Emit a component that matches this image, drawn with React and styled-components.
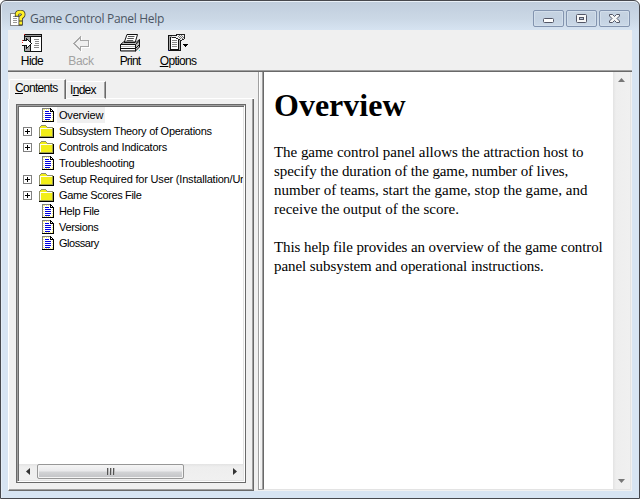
import React from 'react';
import styled, { createGlobalStyle } from 'styled-components';

const GlobalStyle = createGlobalStyle`
  * { box-sizing: border-box; }
  body { margin: 0; background: #fff; overflow: hidden; }
`;

const Window = styled.div`
  width: 640px;
  height: 499px;
  display: flex;
  flex-direction: column;
  padding: 0 7px 7px;
  border: 1px solid #47484d;
  border-radius: 6px 6px 0 0;
  background: linear-gradient(#c0cddc 0, #cbd8e6 18px, #d7e4f2 30px, #d7e4f2 100%);
  box-shadow: inset 0 1px #e9f0f7, inset 1px 0 #e4edf6;
  font-family: 'Liberation Sans', Arial, sans-serif;
  font-size: 11px;
  color: #000;
`;

const TitleBar = styled.header`
  flex: 0 0 29px;
  display: flex;
  align-items: center;
  padding: 7px 2px 0 2px;
  > svg { margin-bottom: 2px; }
`;

const Title = styled.h1`
  flex: 1;
  margin: 0 0 0 4px;
  font: 400 12px/16px 'Open Sans', 'Noto Sans', sans-serif;
  letter-spacing: ${p => p.$spacing}px;
  color: #4c5664;
`;

const Controls = styled.div`
  display: flex;
  gap: 2px;
  align-self: flex-start;
  margin-top: 2px;
`;

const ControlButton = styled.button`
  width: 31px;
  height: 17px;
  padding: 0;
  display: flex;
  align-items: center;
  justify-content: center;
  border: 1px solid #8394af;
  border-radius: 2px;
  background: linear-gradient(#c6d3e1, #c3d1e1 50%, #cbd9e8);
  box-shadow: inset 0 0 0 1px #d2deeb;
`;

const Client = styled.main`
  flex: 1;
  min-height: 0;
  display: flex;
  flex-direction: column;
  background: #f0f0f0;
`;

const Toolbar = styled.nav`
  flex: 0 0 42px;
  display: flex;
  border-bottom: 1px solid #696969;
  box-shadow: inset 0 -1px #a0a0a0;
`;

const Tool = styled.button`
  width: ${p => p.$width || 49}px;
  padding: 4px 0 0;
  border: 0;
  background: none;
  display: flex;
  flex-direction: column;
  align-items: center;
  font: 12px/14px 'Liberation Sans', Arial, sans-serif;
  letter-spacing: ${p => p.$spacing || 0}px;
  color: ${p => (p.$disabled ? '#a2a2a2' : '#000')};
  svg { display: block; margin-bottom: 2px; }
`;

const Key = styled.span`
  text-decoration: underline;
  text-underline-offset: 1px;
`;

const Body = styled.div`
  flex: 1;
  min-height: 0;
  display: flex;
`;

const Navigation = styled.aside`
  flex: 0 0 246px;
  min-width: 0;
  display: flex;
  flex-direction: column;
  padding-top: 7px;
`;

const Tabs = styled.div`
  height: 20px;
  display: flex;
  align-items: flex-end;
`;

const Tab = styled.button`
  width: ${p => p.$width}px;
  height: ${p => (p.$active ? 20 : 18)}px;
  padding: ${p => (p.$active ? '0 0 3px 5px' : '0 0 1px 3px')};
  margin-left: ${p => (p.$active ? 1 : 0)}px;
  border: 0;
  border-top: 1px solid #fff;
  border-left: 1px solid ${p => (p.$active ? '#fff' : '#f8f8f8')};
  border-right: 1px solid #696969;
  border-bottom: ${p => (p.$active ? '0' : '1px solid #fff')};
  box-shadow: inset -1px 0 #a0a0a0;
  border-top-left-radius: 2px;
  background: #f0f0f0;
  text-align: left;
  font: 12px/14px 'Liberation Sans', Arial, sans-serif;
  letter-spacing: ${p => p.$spacing}px;
  color: #000;
`;

const TabRule = styled.div`
  flex: 1;
  height: 1px;
  background: #fff;
`;

const TabPanel = styled.div`
  flex: 1;
  min-height: 0;
  display: flex;
  padding: 5px 7px 7px 7px;
  border-left: 1px solid #fff;
  border-right: 1px solid #696969;
  border-bottom: 1px solid #696969;
  box-shadow: inset -1px -1px #a0a0a0;
`;

const TreeFrame = styled.div`
  flex: 1;
  min-width: 0;
  display: flex;
  border: 1px solid #696969;
`;

const TreeInset = styled.div`
  flex: 1;
  min-width: 0;
  display: flex;
  flex-direction: column;
  border: 1px solid #a0a0a0;
  border-right-color: #fff;
  border-bottom-color: #fff;
  background: #fff;
  box-shadow: inset 1px 1px #696969, inset -1px -1px #e3e3e3;
  padding: 1px;
`;

const TreeList = styled.ul`
  flex: 1;
  min-height: 0;
  margin: 0;
  padding: 0;
  overflow: hidden;
  list-style: none;
`;

const TreeItem = styled.li`
  height: 16px;
  display: flex;
  align-items: center;
  padding-left: 4px;
  white-space: nowrap;
`;

const IconSlot = styled.span`
  flex: 0 0 ${p => p.$width}px;
  height: 16px;
  display: flex;
  align-items: center;
  svg { display: block; }
`;

const ItemLabel = styled.span`
  padding: 0 2px;
  line-height: 16px;
  font-size: 11px;
  letter-spacing: ${p => p.$spacing || 0}px;
  background: ${p => (p.$selected ? '#f0f0f0' : 'transparent')};
`;

const HorizontalBar = styled.div`
  flex: 0 0 16px;
  display: flex;
  background: linear-gradient(#e3e3e3, #eee 3px, #f0f0f0);
`;

const Arrow = styled.span`
  width: ${p => p.$w}px;
  height: ${p => p.$h}px;
  display: flex;
  align-items: center;
  justify-content: center;
`;

const Thumb = styled.div`
  width: 147px;
  height: 15px;
  border: 1px solid #979797;
  border-radius: 2px;
  background: linear-gradient(#f5f5f5, #e9e9eb 48%, #d3d4d6 52%, #c1c2c5);
  box-shadow: inset 0 0 0 1px #f4f4f4;
  display: flex;
  align-items: center;
  justify-content: center;
`;

const Spacer = styled.div`
  flex: 1;
`;

const Splitter = styled.div`
  flex: 0 0 5px;
  margin: 0 0 1px 4px;
  border-left: 1px solid #a0a0a0;
  border-right: 1px solid #a0a0a0;
  border-bottom: 1px solid #a0a0a0;
  background: #f0f0f0;
  box-shadow: inset 1px 0 #fff;
`;

const ContentPane = styled.section`
  flex: 1;
  min-width: 0;
  display: flex;
  background: #fff;
  border-left: 1px solid #696969;
  border-bottom: 1px solid #e3e3e3;
  border-right: 1px solid #e3e3e3;
  margin: 0 1px 1px 0;
`;

const Article = styled.article`
  flex: 1;
  min-width: 0;
  padding: 14px 0 0 10px;
  font: 15px/19px 'Liberation Serif', 'Times New Roman', serif;
  white-space: nowrap;
`;

const Heading = styled.h2`
  margin: 0 0 19px;
  font-size: 32px;
  line-height: 38px;
`;

const Paragraph = styled.p`
  margin: 0 0 19px;
`;

const Line = styled.span`
  display: block;
  letter-spacing: ${p => p.$spacing || 0}px;
`;

const VerticalBar = styled.div`
  width: 17px;
  display: flex;
  flex-direction: column;
  justify-content: space-between;
  background: linear-gradient(90deg, #e3e3e3, #eee 3px, #f0f0f0);
`;

const HelpIcon = () => (
  <svg width="16" height="17" viewBox="0 0 16 17" shapeRendering="crispEdges">
    <path d="M1 3h8v13H1z" fill="#fff" />
    <path d="M.5 15.5V3.5H6M1 15.5h10V12" fill="none" stroke="#888" />
    <path d="M3 6.5h3M3 8.5h4M3 10.5h4M3 12.5h4" stroke="#999" />
    <g shapeRendering="auto" fill="none" strokeLinecap="square">
      <path d="M7 4.7V3.8Q7.4 2 10.3 2Q13.3 2 13.3 4.5Q13.3 6.2 10.7 7.5V9.2M10.7 13v.4" stroke="#333" strokeWidth="4.3" />
      <path d="M7 4.4V3.8Q7.4 2 10.3 2Q13.3 2 13.3 4.5Q13.3 6.2 10.7 7.5V9M10.7 13v.2" stroke="#fff028" strokeWidth="2.8" />
    </g>
  </svg>
);

const HideIcon = () => (
  <svg width="20" height="18" viewBox="0 0 20 18" shapeRendering="crispEdges">
    <path d="M2 0h18v18H2z" fill="#111" />
    <path d="M3 1h16v1H3z" fill="#999" />
    <path d="M3 3h5v14H3z" fill="#a4a4a4" />
    <path d="M9 3h10v14H9z" fill="#fff" />
    <path d="M12 5.5h5M13 7.5h4M13 9.5h4M12 11.5h5M12 13.5h5" stroke="#888" />
    <path d="M0 7h4V5h1v1h1v1h1v1h1v1h1v1H8v1H7v1H6v1H5v1H4v-3H0z" fill="#fff" />
    <path d="M0 6.5h4M0 11.5h4M4.5 4v3M5.5 5v1M6.5 6v1M7.5 7v1M8.5 8v1M9.5 9v1M8.5 10v1M7.5 11v1M6.5 12v1M5.5 13v1M4.5 11v4" stroke="#111" />
    <path d="M0 6h1v1H0zM0 8h1v1H0zM2 0h1v1H2z" fill="#e22" />
    <path d="M2 17h1v1H2z" fill="#2a4" />
  </svg>
);

const BackIcon = () => (
  <svg width="17" height="18" viewBox="0 0 17 18" shapeRendering="crispEdges">
    <path d="M1 9.5L7.5 3V6.5H15.5V12.5H7.5V16Z" stroke="#fff" fill="none" transform="translate(1 1)" />
    <path d="M1 9.5L7.5 3V6.5H15.5V12.5H7.5V16Z" stroke="#a8a8a8" fill="#f0f0f0" />
  </svg>
);

const PrintIcon = () => (
  <svg width="21" height="18" viewBox="0 0 21 18">
    <path d="M7 .5H17.5L15 9H4Z" fill="#fff" stroke="#111" />
    <path d="M8 2.5h6.5M7.3 4.5h6.5M6.7 6.5h6.5" stroke="#555" />
    <path d="M.5 10.5L3.5 8H16.5l3-2.5v7.5l-4 4H.5Z" fill="#bbb" stroke="#111" />
    <path d="M.5 10.5H15.5L19.5 7M.5 14.5H15.5L19.5 10.5M15.5 10.5v7" fill="none" stroke="#111" />
    <path d="M1 11.5h14M1 13.5h14M1 15.5h14" stroke="#fff" />
    <path d="M4 8.5h11" stroke="#111" />
    <path d="M19 16h1v1h-1z" fill="#5dd" />
  </svg>
);

const OptionsIcon = () => (
  <svg width="20" height="18" viewBox="0 0 20 18" shapeRendering="crispEdges">
    <path d="M0 1h13v16H0z" fill="#111" />
    <path d="M1 2h11v14H1z" fill="#aaa" />
    <path d="M3 4h7v11H3z" fill="#fff" />
    <path d="M2.5 3v12.5H10.5V6" stroke="#111" fill="none" />
    <path d="M4 6.5h5M4 8.5h5M4 10.5h5M4 12.5h5" stroke="#888" />
    <path d="M4 2h5V0h8v5h-3v1h-3V5h-2V4H4z" fill="#f0f0f0" />
    <path d="M4 1.5h4M8 .5h9M4 3.5h4M8 4.5h2M10 5.5h2M12 6.5h2M14 5.5h2M16.5 1v4" stroke="#222" />
    <path d="M10 2h1v1h-1zM12 2h1v1h-1zM14 2h1v1h-1zM11 3h1v1h-1zM13 3h1v1h-1zM15 3h1v1h-1zM12 4h1v1h-1zM14 4h1v1h-1zM11 1h1v1h-1zM13 1h1v1h-1z" fill="#777" />
    <path d="M15 10h5v1h-1v1h-1v1h-1v-1h-1v-1h-1z" fill="#000" />
    <path d="M0 16h1v1H0z" fill="#22a" />
  </svg>
);

const PageIcon = () => (
  <svg width="12" height="14" viewBox="0 0 12 14" shapeRendering="crispEdges">
    <path d="M0 0h8l4 4v10H0z" fill="#fff" />
    <path d="M1.5 1v12M2 1.5h6M2 12.5h9M10.5 5v8" stroke="#f4ee80" strokeDasharray="1 1" />
    <path d="M.5 13V.5H8" stroke="#808080" fill="none" />
    <path d="M8.5 0v3.5H12M9.5 1v1M10.5 2v1M11.5 3v11M0 13.5h12" stroke="#000" fill="none" />
    <path d="M3 3h4v1H3zM3 5h6v1H3zM3 7h6v1H3zM3 9h6v1H3zM3 11h5v1H3z" fill="#0000e0" />
  </svg>
);

const FolderIcon = () => (
  <svg width="15" height="13" viewBox="0 0 15 13" shapeRendering="crispEdges">
    <path d="M0 2h1V1h1V0h5v1h1v1h6v10H0z" fill="#f2ee18" />
    <path d="M.5 12V2M1 1.5h1M2 .5h5M7 1.5h1M8 2.5h6" stroke="#909070" />
    <path d="M1 3.5h12M1.5 3v9" stroke="#fffff0" />
    <path d="M14.5 3v10M0 12.5h15" stroke="#000" />
    <path d="M13.5 3v9M1 11.5h13" stroke="#a0a050" />
  </svg>
);

const PlusIcon = () => (
  <svg width="9" height="9" viewBox="0 0 9 9" shapeRendering="crispEdges">
    <path d="M.5.5h8v8h-8z" fill="#fff" stroke="#808080" />
    <path d="M2 4.5h5M4.5 2v5" stroke="#000" />
  </svg>
);

const Grip = () => (
  <svg width="8" height="7" viewBox="0 0 8 7" shapeRendering="crispEdges">
    <path d="M.5 0v7M3.5 0v7M6.5 0v7" stroke="#555" />
    <path d="M1.5 0v7M4.5 0v7M7.5 0v7" stroke="#bbb" />
  </svg>
);

const arrowPaths = {
  left: 'M6 1v7L2 4.5Z',
  right: 'M3 1v7L7 4.5Z',
  up: 'M1 6h7L4.5 2Z',
  down: 'M1 3h7L4.5 7Z',
};

const ScrollArrow = ({ direction, width, height, color = '#333' }) => (
  <Arrow $w={width} $h={height}>
    <svg width="9" height="9" viewBox="0 0 9 9">
      <path d={arrowPaths[direction]} fill={color} />
    </svg>
  </Arrow>
);

const MinimizeIcon = () => (
  <svg width="13" height="13" viewBox="0 0 13 13">
    <rect x="1.5" y="6.5" width="10" height="4" rx="1" fill="#fff" stroke="#535666" />
  </svg>
);

const MaximizeIcon = () => (
  <svg width="13" height="13" viewBox="0 0 13 13">
    <rect x="1.5" y="2.5" width="10" height="8" rx="1" fill="#f7f7f7" stroke="#535666" />
    <rect x="4.5" y="5.5" width="4" height="2" fill="#b8c5d6" stroke="#535666" />
  </svg>
);

const CloseIcon = () => (
  <svg width="13" height="13" viewBox="0 0 13 13">
    <path d="M1.5 2.5h3l2 2 2-2h3v1.5L9 6.5l2.5 2.5v1.5h-3l-2-2-2 2h-3V9L4 6.5 1.5 4z" fill="#f7f7f7" stroke="#535666" />
  </svg>
);

const topics = [
  { label: 'Overview', selected: true, spacing: -0.2 },
  { label: 'Subsystem Theory of Operations', book: true, spacing: -0.26 },
  { label: 'Controls and Indicators', book: true, spacing: -0.22 },
  { label: 'Troubleshooting', spacing: -0.2 },
  { label: 'Setup Required for User (Installation/Uninstallation)', book: true, spacing: -0.2 },
  { label: 'Game Scores File', book: true, spacing: -0.35 },
  { label: 'Help File', spacing: -0.35 },
  { label: 'Versions', spacing: -0.35 },
  { label: 'Glossary', spacing: -0.45 },
];

const paragraphs = [
  [
    { text: 'The game control panel allows the attraction host to', spacing: -0.04 },
    { text: 'specify the duration of the game, number of lives,', spacing: -0.1 },
    { text: 'number of teams, start the game, stop the game, and', spacing: 0.02 },
    { text: 'receive the output of the score.', spacing: 0 },
  ],
  [
    { text: 'This help file provides an overview of the game control', spacing: -0.09 },
    { text: 'panel subsystem and operational instructions.', spacing: -0.07 },
  ],
];

export default function App() {
  return (
    <>
      <GlobalStyle />
      <Window>
        <TitleBar>
          <HelpIcon />
          <Title $spacing={-0.31}>Game Control Panel Help</Title>
          <Controls>
            <ControlButton aria-label="Minimize"><MinimizeIcon /></ControlButton>
            <ControlButton aria-label="Maximize"><MaximizeIcon /></ControlButton>
            <ControlButton aria-label="Close"><CloseIcon /></ControlButton>
          </Controls>
        </TitleBar>
        <Client>
          <Toolbar>
            <Tool $width={48} $spacing={-0.6}><HideIcon />Hide</Tool>
            <Tool $width={50} $disabled $spacing={-0.3}><BackIcon />Back</Tool>
            <Tool $width={48} $spacing={-0.8}><PrintIcon />Print</Tool>
            <Tool $width={48} $spacing={-0.7}><OptionsIcon /><span><Key>O</Key>ptions</span></Tool>
          </Toolbar>
          <Body>
            <Navigation>
              <Tabs>
                <Tab $active $width={57} $spacing={-0.7}><Key>C</Key>ontents</Tab>
                <Tab $width={40} $spacing={-0.7}>I<Key>n</Key>dex</Tab>
                <TabRule />
              </Tabs>
              <TabPanel>
                <TreeFrame>
                  <TreeInset>
                    <TreeList>
                      {topics.map(({ label, book, selected, spacing }) => (
                        <TreeItem key={label}>
                          <IconSlot $width={book ? 16 : 19}>{book && <PlusIcon />}</IconSlot>
                          <IconSlot $width={book ? 18 : 15}>{book ? <FolderIcon /> : <PageIcon />}</IconSlot>
                          <ItemLabel $selected={selected} $spacing={spacing}>{label}</ItemLabel>
                        </TreeItem>
                      ))}
                    </TreeList>
                    <HorizontalBar>
                      <ScrollArrow direction="left" width={18} height={15} />
                      <Thumb><Grip /></Thumb>
                      <Spacer />
                      <ScrollArrow direction="right" width={18} height={15} />
                    </HorizontalBar>
                  </TreeInset>
                </TreeFrame>
              </TabPanel>
            </Navigation>
            <Splitter />
            <ContentPane>
              <Article>
                <Heading>Overview</Heading>
                {paragraphs.map((lines, index) => (
                  <Paragraph key={index}>
                    {lines.map(({ text, spacing }) => (
                      <Line key={text} $spacing={spacing}>{text}</Line>
                    ))}
                  </Paragraph>
                ))}
              </Article>
              <VerticalBar>
                <ScrollArrow direction="up" width={17} height={17} color="#777" />
                <ScrollArrow direction="down" width={17} height={17} color="#777" />
              </VerticalBar>
            </ContentPane>
          </Body>
        </Client>
      </Window>
    </>
  );
}
